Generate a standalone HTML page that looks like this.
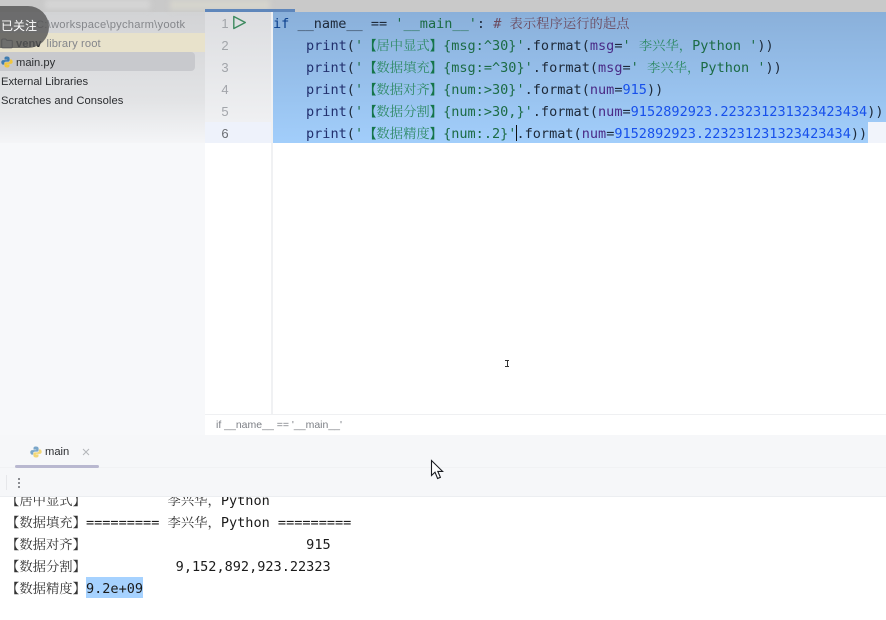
<!DOCTYPE html>
<html><head><meta charset="utf-8">
<style>
html,body{margin:0;padding:0;background:#fff}
#p{position:relative;width:886px;height:620px;overflow:hidden;background:#fff}
.a{position:absolute}
.ui{font-family:"Liberation Sans","Noto Sans CJK SC",sans-serif;font-size:11.2px;white-space:nowrap;line-height:16px;color:#2b2d30}
.c{position:absolute;left:273px;height:22px;line-height:22px;font-family:"DejaVu Sans Mono","Noto Sans CJK SC",monospace;font-size:13.55px;white-space:pre;color:#1e2a3a}
.g{color:#1c6b45}.b{color:#1750eb}.k{color:#0b3f8c}.v{color:#4a2a86}.m{color:#6b4a5e}.pr{color:#22306e}
.s{font-family:"Noto Serif CJK SC",serif;font-size:13.33px;color:#2f8a66}.h{font-family:"Noto Sans CJK SC",sans-serif;font-size:13.33px;color:#14754a;font-weight:bold}
.m .s{color:#6b4a5e}
.n{position:absolute;left:217px;width:16px;text-align:center;font-family:"Liberation Sans",sans-serif;font-size:13px;color:#a2a5aa;line-height:22px}
.o{position:absolute;left:6px;height:22px;line-height:22px;font-family:"DejaVu Sans Mono","Noto Sans CJK SC",monospace;font-size:13.55px;white-space:pre;color:#1b1b1b}
.o i{font-style:normal;font-family:"Noto Serif CJK SC",serif;font-size:13.33px;color:#333}
</style></head><body><div id="p">
<div class="a" style="left:0;top:0;width:205px;height:435px;background:#f7f8fa"></div>
<div class="a" style="left:0;top:0;width:205px;height:143px;background:linear-gradient(#d0d1d3 0,#d9dadc 50px,#e2e3e5 100px,#f4f5f7 143px)"></div>
<div class="a" style="left:0;top:0;width:886px;height:12px;background:#c9c9c9"></div>
<div class="a" style="left:45px;top:0;width:105px;height:9px;background:#d6d6d6;filter:blur(3px)"></div>
<div class="a" style="left:170px;top:0;width:100px;height:10px;background:#d6d5cd;filter:blur(3px)"></div>
<div class="a" style="left:205px;top:9px;width:90px;height:3px;background:#3a6fb5;opacity:.75"></div>
<div class="a" style="left:205px;top:12px;width:66px;height:110px;background:linear-gradient(#dcdde0,#eff0f2)"></div>
<div class="a" style="left:205px;top:122px;width:66px;height:21px;background:#eef2fb"></div>
<div class="a" style="left:271px;top:12px;width:2px;height:403px;background:#f0f1f3"></div>
<div class="a" style="left:273px;top:12px;width:613px;height:131px;background:linear-gradient(#8ab0da,#a2cefb)"></div>
<div class="a" style="left:868px;top:122px;width:18px;height:21px;background:#f1f4fb"></div>

<div class="a" style="left:0;top:33px;width:205px;height:19px;background:#e8e2cb"></div>
<div class="a" style="left:0;top:52px;width:195px;height:19px;border-radius:0 4px 4px 0;background:#c8c9cd"></div>
<svg class="a" style="left:1px;top:38px" width="12" height="11" viewBox="0 0 12 11"><path d="M.7 2.3Q.7 1 2 1H4.6L6 2.4H10.2Q11.3 2.4 11.3 3.5V8.7Q11.3 9.8 10.2 9.8H1.8Q.7 9.8.7 8.7Z" fill="#dcdcd6" stroke="#6e6f73" stroke-width="1.1"/></svg>
<div class="a ui" style="left:16px;top:36px"><b style="font-weight:600;color:#2b2d30">venv</b><span style="color:#84868b;margin-left:5px;letter-spacing:.12px">library root</span></div>
<svg class="a" style="left:1px;top:56px" width="12" height="12" viewBox="0 0 12 12"><path d="M6 .5C3.6.5 3.5 1.5 3.5 2.5V3.6H6.2V4.1H2.2C1 4.1.3 5 .3 6.2S1 8.6 2.2 8.6H3.2V7.2C3.2 6.2 4 5.6 5 5.6H7.3C8 5.6 8.6 5 8.6 4.2V2.4C8.6 1.2 7.6.5 6 .5Z" fill="#3f7cb0"/><path d="M6 11.5C8.4 11.5 8.5 10.5 8.5 9.5V8.4H5.8V7.9H9.8C11 7.9 11.7 7 11.7 5.8S11 3.4 9.8 3.4H8.9V4.8C8.9 5.8 8 6.4 7 6.4H4.7C4 6.4 3.4 7 3.4 7.8V9.6C3.4 10.8 4.4 11.5 6 11.5Z" fill="#f0c63f"/></svg>
<div class="a ui" style="left:16px;top:55px">main.py</div>
<div class="a ui" style="left:1px;top:74px">External Libraries</div>
<div class="a ui" style="left:1px;top:93px;letter-spacing:.05px">Scratches and Consoles</div>
<div class="a ui" style="left:36px;top:17px;color:#85878b;letter-spacing:.22px">C:\workspace\pycharm\yootk</div>
<div class="a" style="left:-25px;top:6px;width:74px;height:42px;border-radius:21px;background:rgba(85,85,85,.82)"></div>
<div class="a ui" style="left:1px;top:18px;color:#fff;font-size:12px">已关注</div>

<div class="n" style="top:13px">1</div><div class="n" style="top:35px">2</div><div class="n" style="top:57px">3</div><div class="n" style="top:79px">4</div><div class="n" style="top:101px">5</div><div class="n" style="top:123px;color:#6a6d72">6</div>
<svg class="a" style="left:232px;top:15px" width="15" height="15" viewBox="0 0 15 15"><path d="M1.8 1.5V13.5L13.3 7.5Z" fill="none" stroke="#3d8a5f" stroke-width="1.4" stroke-linejoin="round"/></svg>

<div class="c" style="top:12px"><span class="k">if</span> __name__ == <span class="g">'__main__'</span>: <span class="m"># <span class="s">表示程序运行的起点</span></span></div>
<div class="c" style="top:34px;left:306px"><span class="pr">print</span>(<span class="g">'</span><span class="h">【</span><span class="s">居中显式</span><span class="h">】</span><span class="g">{msg:^30}'</span>.format(<span class="v">msg</span>=<span class="g">' </span><span class="s">李兴华，</span><span class="g">Python '</span>))</div>
<div class="c" style="top:56px;left:306px"><span class="pr">print</span>(<span class="g">'</span><span class="h">【</span><span class="s">数据填充</span><span class="h">】</span><span class="g">{msg:=^30}'</span>.format(<span class="v">msg</span>=<span class="g">' </span><span class="s">李兴华，</span><span class="g">Python '</span>))</div>
<div class="c" style="top:78px;left:306px"><span class="pr">print</span>(<span class="g">'</span><span class="h">【</span><span class="s">数据对齐</span><span class="h">】</span><span class="g">{num:&gt;30}'</span>.format(<span class="v">num</span>=<span class="b">915</span>))</div>
<div class="c" style="top:100px;left:306px"><span class="pr">print</span>(<span class="g">'</span><span class="h">【</span><span class="s">数据分割</span><span class="h">】</span><span class="g">{num:&gt;30,}'</span>.format(<span class="v">num</span>=<span class="b">9152892923.223231231323423434</span>))</div>
<div class="c" style="top:122px;left:306px"><span class="pr">print</span>(<span class="g">'</span><span class="h">【</span><span class="s">数据精度</span><span class="h">】</span><span class="g">{num:.2}'</span>.format(<span class="v">num</span>=<span class="b">9152892923.223231231323423434</span>))</div>
<div class="a" style="left:516px;top:125px;width:1px;height:16px;background:#101010"></div>

<div class="a" style="left:205px;top:414px;width:681px;height:1px;background:#eff0f2"></div>
<div class="a ui" style="left:216px;top:417px;color:#7c7f85;font-size:10.5px">if __name__ == '__main__'</div>
<div class="a" style="left:0;top:435px;width:886px;height:62px;background:#f6f7f9"></div>
<div class="a" style="left:0;top:467px;width:886px;height:1px;background:#f1f2f4"></div>
<div class="a" style="left:0;top:496px;width:886px;height:1px;background:#eceef1"></div>
<svg class="a" style="left:30px;top:446px" width="12" height="12" viewBox="0 0 12 12"><path d="M6 .5C3.6.5 3.5 1.5 3.5 2.5V3.6H6.2V4.1H2.2C1 4.1.3 5 .3 6.2S1 8.6 2.2 8.6H3.2V7.2C3.2 6.2 4 5.6 5 5.6H7.3C8 5.6 8.6 5 8.6 4.2V2.4C8.6 1.2 7.6.5 6 .5Z" fill="#7aa6c9"/><path d="M6 11.5C8.4 11.5 8.5 10.5 8.5 9.5V8.4H5.8V7.9H9.8C11 7.9 11.7 7 11.7 5.8S11 3.4 9.8 3.4H8.9V4.8C8.9 5.8 8 6.4 7 6.4H4.7C4 6.4 3.4 7 3.4 7.8V9.6C3.4 10.8 4.4 11.5 6 11.5Z" fill="#f2d778"/></svg>
<div class="a ui" style="left:45px;top:444px">main</div>
<svg class="a" style="left:82px;top:448px" width="8" height="8" viewBox="0 0 8 8"><path d="M1 1L7 7M7 1L1 7" stroke="#b4b6ba" stroke-width="1"/></svg>
<div class="a" style="left:15px;top:465px;width:84px;height:3px;border-radius:2px;background:#b9b8d0"></div>
<div class="a" style="left:6px;top:475px;width:1px;height:15px;background:#e6e7ea"></div>
<div class="a" style="left:18px;top:478px;width:2px;height:2px;background:#8b8d92"></div>
<div class="a" style="left:18px;top:482px;width:2px;height:2px;background:#8b8d92"></div>
<div class="a" style="left:18px;top:486px;width:2px;height:2px;background:#8b8d92"></div>

<div class="a" style="left:0;top:497px;width:886px;height:123px;overflow:hidden">
<div class="o" style="top:-8px"><i>【居中显式】</i>          <i>李兴华，</i>Python</div>
<div class="o" style="top:14px"><i>【数据填充】</i>========= <i>李兴华，</i>Python =========</div>
<div class="o" style="top:36px"><i>【数据对齐】</i>                           915</div>
<div class="o" style="top:58px"><i>【数据分割】</i>           9,152,892,923.22323</div>
<div class="a" style="left:86px;top:80px;width:57px;height:21px;background:#a6d2ff"></div>
<div class="o" style="top:80px"><i>【数据精度】</i>9.2e+09</div>
</div>

<svg class="a" style="left:430px;top:459px" width="15" height="22" viewBox="0 0 15 22"><path d="M1.5 1.5V16.5L5 13.2 7.6 19.5 10.4 18.3 7.8 12.4H12.6Z" fill="#fff" stroke="#1a1c22" stroke-width="1.1" stroke-linejoin="miter"/></svg>
<div class="a" style="left:505px;top:360px;width:4px;height:1px;background:#333"></div>
<div class="a" style="left:506.5px;top:360px;width:1px;height:7px;background:#333"></div>
<div class="a" style="left:505px;top:366px;width:4px;height:1px;background:#333"></div>
</div></body></html>
